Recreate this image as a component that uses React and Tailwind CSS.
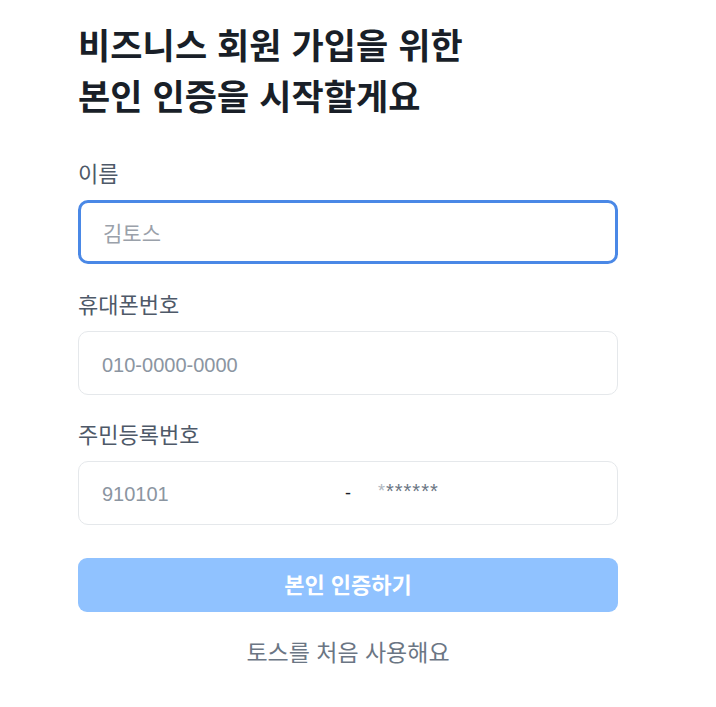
export default function App() {
  const font = { fontFamily: '"Liberation Sans", "Noto Sans CJK KR", sans-serif' };
  return (
    <div className="w-[716px] h-[707px] bg-white" style={font}>
      <div className="w-[540px] ml-[78px] pt-[21px]">
        <h1 className="text-[35px] font-bold leading-[51px] text-[#191f28] tracking-[0.1px]">
          비즈니스 회원 가입을 위한
          <br />
          본인 인증을 시작할게요
        </h1>

        <div className="mt-[39px] flex flex-col">
          <label className="text-[22px] leading-[26px] text-[#4e5968]">이름</label>
          <div className="mt-[12px] h-[64px] rounded-[10px] border-[3px] border-[#4a88e6] flex items-center pl-[22px] pt-[3px]">
            <span className="text-[21px] text-[#9aa1aa]">김토스</span>
          </div>

          <label className="mt-[29px] text-[22px] leading-[26px] text-[#4e5968]">휴대폰번호</label>
          <div className="mt-[12px] h-[64px] rounded-[10px] border border-[#e5e8eb] flex items-center pl-[23px] pt-[4px]">
            <span className="text-[20px] text-[#8b95a1]">010-0000-0000</span>
          </div>

          <label className="mt-[28px] text-[22px] leading-[26px] text-[#4e5968]">주민등록번호</label>
          <div className="mt-[12px] h-[64px] rounded-[10px] border border-[#e5e8eb] flex items-center pl-[23px] pt-[2px]">
            <span className="text-[20px] text-[#8b95a1] w-[243px]">910101</span>
            <span className="text-[18px] text-[#191f28] -mt-[2px]">-</span>
            <span className="ml-[27px] text-[18px] text-[#b0b8c1] -mt-[6px] tracking-[1px]">*</span>
            <span className="text-[20px] text-[#6b7684] -mt-[6px] tracking-[1px]">******</span>
          </div>

          <button className="mt-[33px] h-[54px] rounded-[9px] bg-[#90c2ff] text-white text-[22px] font-bold">
            본인 인증하기
          </button>

          <div className="mt-[27px] text-center text-[23px] leading-[28px] text-[#6b7684]">
            토스를 처음 사용해요
          </div>
        </div>
      </div>
    </div>
  );
}
